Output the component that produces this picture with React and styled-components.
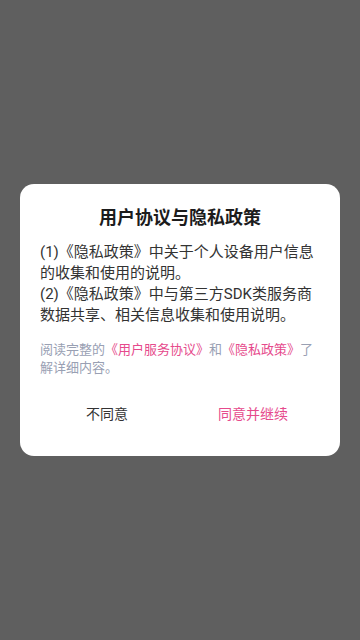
import React from 'react';
import styled, { createGlobalStyle } from 'styled-components';

const GlobalStyle = createGlobalStyle`
  html, body {
    margin: 0;
    padding: 0;
    height: 100%;
  }
  body {
    font-family: Roboto, "Noto Sans CJK SC", sans-serif;
    background-color: #5f5f5f;
  }
  #root {
    height: 100%;
  }
`;

const Screen = styled.div`
  height: 640px;
  display: flex;
  align-items: center;
  justify-content: center;
  background-color: #5f5f5f;
`;

const Dialog = styled.div`
  width: 320px;
  box-sizing: border-box;
  background: #fff;
  border-radius: 14px;
  padding: 21px 0 21px;
  display: flex;
  flex-direction: column;
`;

const Title = styled.h2`
  margin: 0;
  font-size: 18px;
  line-height: 26px;
  font-weight: 700;
  color: #1c1c1c;
  text-align: center;
`;

const Body = styled.p`
  margin: 11px 20px 0;
  font-size: 15px;
  line-height: 21px;
  color: #333;
`;

const Note = styled.p`
  margin: 15px 20px 0;
  font-size: 13px;
  line-height: 18px;
  color: #99a0b3;
`;

const Link = styled.a`
  color: #e64a8c;
  text-decoration: none;
  cursor: pointer;
`;

const Actions = styled.div`
  margin-top: 14px;
  padding: 0 14px;
  display: grid;
  grid-template-columns: 1fr 1fr;
`;

const ActionButton = styled.button`
  height: 44px;
  border: none;
  background: none;
  font-family: inherit;
  font-size: 14px;
  color: ${props => (props.primary ? '#e64a8c' : '#333')};
  cursor: pointer;
`;

export default function App() {
  return (
    <>
      <GlobalStyle />
      <Screen>
        <Dialog>
          <Title>用户协议与隐私政策</Title>
          <Body>
            (1)《隐私政策》中关于个人设备用户信息的收集和使用的说明。
            <br />
            (2)《隐私政策》中与第三方SDK类服务商数据共享、相关信息收集和使用说明。
          </Body>
          <Note>
            阅读完整的<Link>《用户服务协议》</Link>和<Link>《隐私政策》</Link>了解详细内容。
          </Note>
          <Actions>
            <ActionButton>不同意</ActionButton>
            <ActionButton primary>同意并继续</ActionButton>
          </Actions>
        </Dialog>
      </Screen>
    </>
  );
}
